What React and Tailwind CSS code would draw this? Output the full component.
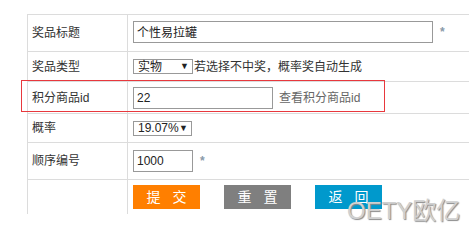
import React from "react";

const font = { fontFamily: '"Liberation Sans", "Noto Sans CJK SC", sans-serif' };

function Row({ label, h, last, children }) {
  return (
    <div className={`flex ${h} ${last ? "" : "border-b border-[#dcdcdc]"}`}>
      <div className="w-[100px] shrink-0 border-r border-[#dcdcdc] pl-[4px] flex items-center text-[#333]">
        {label}
      </div>
      <div className="flex-1 pl-[5px] flex items-center">{children}</div>
    </div>
  );
}

function FakeSelect({ value, w }) {
  return (
    <div className={`${w} h-[15px] border border-[#999] bg-white flex items-center justify-between pl-[4px] pr-[3px] text-[12px] leading-none text-[#222]`}>
      <span>{value}</span>
      <span className="text-[9px]">▼</span>
    </div>
  );
}

function Star() {
  return <span className="text-[#8a9aaa] text-[12px] font-bold">*</span>;
}

export default function App() {
  return (
    <div className="relative w-[469px] h-[232px] bg-white overflow-hidden text-[12px]" style={font}>
      <div className="pt-[14px] pl-[27px]">
        <div className="w-[442px] border-l border-t border-[#dcdcdc]">
          <Row label="奖品标题" h="h-[37px]">
            <input
              className="w-[300px] h-[22px] border border-[#999] px-[3px] text-[12px] text-[#222] outline-none -mt-[3px]"
              defaultValue="个性易拉罐"
            />
            <span className="ml-[7px] -mt-[3px]"><Star /></span>
          </Row>
          <Row label="奖品类型" h="h-[30px]">
            <FakeSelect value="实物" w="w-[60px]" />
            <span className="ml-[1px] text-[#333]">若选择不中奖，概率奖自动生成</span>
          </Row>
          <Row label="积分商品id" h="h-[32px]">
            <input
              className="w-[140px] h-[22px] border border-[#999] px-[3px] text-[12px] text-[#222] outline-none"
              defaultValue="22"
            />
            <span className="ml-[6px] text-[#666]">查看积分商品id</span>
          </Row>
          <Row label="概率" h="h-[29px]">
            <FakeSelect value="19.07%" w="w-[59px]" />
          </Row>
          <Row label="顺序编号" h="h-[37px]">
            <input
              className="w-[60px] h-[22px] border border-[#999] px-[3px] text-[12px] text-[#222] outline-none"
              defaultValue="1000"
            />
            <span className="ml-[7px]"><Star /></span>
          </Row>
          <Row label="" h="h-[34px]" last>
            <div className="self-start pt-[5px] flex gap-[24px]">
              <button className="w-[67px] h-[24px] bg-[#ff7f00] text-white text-[14px] tracking-[4px] pl-[4px]">提 交</button>
              <button className="w-[67px] h-[24px] bg-[#7f7f7f] text-white text-[14px] tracking-[4px] pl-[4px]">重 置</button>
              <button className="w-[67px] h-[24px] bg-[#0099cc] text-white text-[14px] tracking-[4px] pl-[4px]">返 回</button>
            </div>
          </Row>
        </div>
      </div>
      <div className="absolute left-[21px] top-[80px] w-[364px] h-[32px] border border-[#e8383d]" />
      <div
        className="absolute left-[347px] top-[199px] text-[24px] leading-none text-[#d0d0d0] [text-shadow:1px_1px_1px_#8a8a8a]"
        style={{ fontFamily: '"Liberation Sans", "Noto Sans CJK SC", sans-serif' }}
      >
        OETY欧亿
      </div>
    </div>
  );
}
